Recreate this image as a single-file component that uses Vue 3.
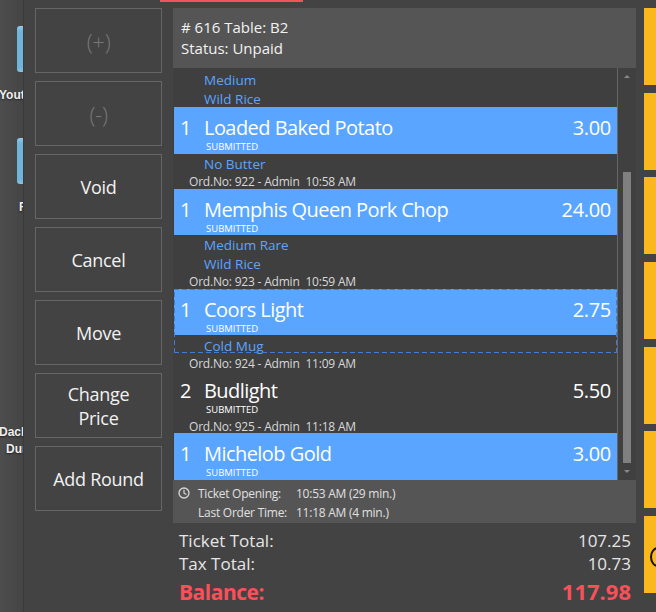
<template>
  <div class="screen">
    <aside class="strip">
      <div v-for="tile in stripTiles" :key="tile.label" class="strip-tile" :style="{ height: tile.height + 'px' }">
        <div v-if="tile.icon" class="strip-icon"></div>
        <div class="strip-label" :style="{ marginLeft: tile.indent + 'px' }">{{ tile.label }}</div>
        <div v-if="tile.label2" class="strip-label" :style="{ marginLeft: tile.indent2 + 'px' }">{{ tile.label2 }}</div>
      </div>
    </aside>

    <div class="main">
      <div class="top-line"></div>
      <div class="columns">
        <div class="actions">
          <button v-for="a in actions" :key="a.label" class="action" :class="{ disabled: a.disabled }">
            <span v-html="a.label"></span>
          </button>
        </div>

        <section class="ticket">
          <header class="ticket-head">
            <div># 616 Table: B2</div>
            <div>Status: Unpaid</div>
          </header>

          <div class="ticket-body">
            <div class="orders">
              <div class="mod first">Medium</div>
              <div class="mod">Wild Rice</div>
              <template v-for="o in orders" :key="o.name">
                <div :class="{ focused: o.focused }">
                  <div class="item" :class="{ selected: o.selected }">
                    <div class="item-line">
                      <span class="qty">{{ o.qty }}</span>
                      <span class="name">{{ o.name }}</span>
                      <span class="price">{{ o.price }}</span>
                    </div>
                    <div class="state">SUBMITTED</div>
                  </div>
                  <div v-for="m in o.mods" :key="m" class="mod">{{ m }}</div>
                </div>
                <div v-if="o.meta" class="meta">{{ o.meta }}</div>
              </template>
            </div>
            <div class="scrollbar">
              <div class="arrow up"></div>
              <div class="track"><div class="thumb"></div></div>
              <div class="arrow down"></div>
            </div>
          </div>

          <footer class="ticket-foot">
            <svg class="clock" width="12" height="12" viewBox="0 0 12 12">
              <circle cx="6" cy="6" r="5" fill="none" stroke="#d8d8d8" stroke-width="1.3" />
              <path d="M6 2.8V6.2L8.4 7.6" fill="none" stroke="#d8d8d8" stroke-width="1.2" />
            </svg>
            <div class="times">
              <span>Ticket Opening:</span><span>10:53 AM (29 min.)</span>
              <span>Last Order Time:</span><span>11:18 AM (4 min.)</span>
            </div>
          </footer>

          <div class="totals">
            <div class="total"><span>Ticket Total:</span><span>107.25</span></div>
            <div class="total"><span>Tax Total:</span><span>10.73</span></div>
            <div class="total balance"><span>Balance:</span><span class="balance-value">117.98</span></div>
          </div>
        </section>

        <div class="tiles">
          <div v-for="n in 7" :key="n" class="tile">
            <span v-if="n === 7" class="tile-glyph"></span>
          </div>
        </div>
      </div>
    </div>
  </div>
</template>

<script setup>
const stripTiles = [
  { label: 'Youtube', icon: true, indent: -1, height: 112 },
  { label: 'Fish', icon: true, indent: 19, height: 286 },
  { label: 'Dachshund', label2: 'Durham', indent: -1, indent2: 6, height: 100 }
]

const actions = [
  { label: '(+)', disabled: true },
  { label: '(-)', disabled: true },
  { label: 'Void' },
  { label: 'Cancel' },
  { label: 'Move' },
  { label: 'Change<br>Price' },
  { label: 'Add Round' }
]

const orders = [
  { qty: 1, name: 'Loaded Baked Potato', price: '3.00', selected: true, mods: ['No Butter'], meta: 'Ord.No: 922 - Admin  10:58 AM' },
  { qty: 1, name: 'Memphis Queen Pork Chop', price: '24.00', selected: true, mods: ['Medium Rare', 'Wild Rice'], meta: 'Ord.No: 923 - Admin  10:59 AM' },
  { qty: 1, name: 'Coors Light', price: '2.75', selected: true, focused: true, mods: ['Cold Mug'], meta: 'Ord.No: 924 - Admin  11:09 AM' },
  { qty: 2, name: 'Budlight', price: '5.50', mods: [], meta: 'Ord.No: 925 - Admin  11:18 AM' },
  { qty: 1, name: 'Michelob Gold', price: '3.00', selected: true, mods: [] }
]
</script>

<style>
html, body { margin: 0; background: #434343; }
</style>

<style scoped>
.screen {
  width: 656px;
  height: 612px;
  display: flex;
  overflow: hidden;
  background: #434343;
  color: #f2f2f2;
  font-family: "Open Sans", "Noto Sans", sans-serif;
}

.strip {
  width: 23px;
  flex: none;
  padding-top: 26px;
  overflow: hidden;
  background: linear-gradient(90deg, #4d4d4d, #454545);
  border-right: 1px solid #3a3a3a;
}
.strip-tile { width: 23px; }
.strip-icon {
  width: 20px;
  height: 46px;
  margin-left: 17px;
  margin-bottom: 15px;
  border-radius: 3px 0 0 3px;
  background: linear-gradient(180deg, #93cbe6 0, #6fb5da 12%, #6fb5da 90%, #8cc2dd 100%);
}
.strip-label {
  white-space: nowrap;
  font: bold 12px/17px "Liberation Sans", sans-serif;
  color: #eee;
  text-shadow: 0 1px 2px #222;
}

.main { flex: 1; min-width: 0; }
.top-line {
  width: 143px;
  height: 2px;
  margin-left: 136px;
  background: #f2545b;
}
.columns {
  display: flex;
  padding: 6px 0 0 11px;
}

.actions {
  width: 127px;
  flex: none;
  display: flex;
  flex-direction: column;
  gap: 8px;
}
.action {
  height: 65px;
  padding: 0;
  border: 1px solid #666;
  background: transparent;
  color: #f2f2f2;
  font: 18px/24px "Open Sans", "Noto Sans", sans-serif;
  letter-spacing: -0.3px;
}
.action.disabled {
  font-size: 22px;
  font-weight: 300;
  color: #777;
}

.ticket {
  width: 463px;
  flex: none;
  margin-left: 11px;
}
.ticket-head {
  height: 60px;
  box-sizing: border-box;
  padding: 9px 0 0 8px;
  background: #555;
  font-size: 15px;
  line-height: 21px;
}
.ticket-body {
  height: 412px;
  display: flex;
  background: #3f3f3f;
  overflow: hidden;
}
.orders {
  flex: 1;
  min-width: 0;
  padding-left: 1px;
}
.item {
  height: 46.5px;
  box-sizing: border-box;
  padding: 7px 6px 0 6px;
}
.item.selected { background: #5aa5ff; }
.item-line {
  display: flex;
  align-items: baseline;
  font-size: 20px;
  line-height: 27px;
  color: #fff;
}
.qty { width: 24px; }
.name { flex: 1; letter-spacing: -0.55px; }
.price { letter-spacing: -0.3px; }
.state {
  margin: 1px 0 0 26px;
  font-size: 9.5px;
  line-height: 10px;
  color: #fff;
}
.mod {
  height: 18.5px;
  padding-left: 30px;
  font-size: 13.5px;
  line-height: 21px;
  color: #5aa5ff;
}
.mod.first { padding-top: 2px; }
.meta {
  height: 16.5px;
  padding-left: 15px;
  font-size: 12px;
  line-height: 20px;
  letter-spacing: -0.2px;
  color: #d8d8d8;
  white-space: pre;
}
.focused { position: relative; }
.focused .mod { line-height: 23px; }
/* dashed focus rectangle, longer dashes than outline:dashed gives */
.focused::after {
  content: "";
  position: absolute;
  inset: 0 0 1px 0;
  pointer-events: none;
  background:
    repeating-linear-gradient(90deg, #3d7fd6 0 5px, transparent 5px 8px) top / 100% 1px no-repeat,
    repeating-linear-gradient(90deg, #3d7fd6 0 5px, transparent 5px 8px) bottom / 100% 1px no-repeat,
    repeating-linear-gradient(0deg, #3d7fd6 0 5px, transparent 5px 8px) left / 1px 100% no-repeat,
    repeating-linear-gradient(0deg, #3d7fd6 0 5px, transparent 5px 8px) right / 1px 100% no-repeat;
}

.scrollbar {
  width: 17px;
  flex: none;
  margin-right: 1px;
  display: flex;
  flex-direction: column;
  align-items: center;
  border-left: 1px solid #666;
  background: #404040;
}
.arrow {
  width: 0;
  height: 0;
  border-left: 3px solid transparent;
  border-right: 3px solid transparent;
}
.arrow.up { margin-top: 7px; border-bottom: 3px solid #888; }
.arrow.down { margin-bottom: 7px; border-top: 3px solid #888; }
.track { flex: 1; width: 8px; padding-top: 94px; box-sizing: border-box; }
.thumb { height: 291px; background: #808080; }

.ticket-foot {
  height: 43px;
  box-sizing: border-box;
  display: flex;
  padding: 5px 0 0 5px;
  background: #555;
}
.clock { flex: none; margin-top: 2px; }
.times {
  display: grid;
  grid-template-columns: 98px auto;
  justify-content: start;
  margin-left: 8px;
  font-size: 12px;
  line-height: 18px;
  letter-spacing: -0.25px;
  color: #e0e0e0;
}

.totals { padding: 6px 5px 0 6px; }
.total {
  display: flex;
  justify-content: space-between;
  font-size: 17px;
  line-height: 23px;
  color: #e6e6e6;
}
.balance {
  margin-top: 2px;
  align-items: baseline;
  font-size: 21px;
  line-height: 28px;
  font-weight: 700;
  letter-spacing: -0.5px;
  color: #f9505a;
}
.balance-value { font-size: 22px; letter-spacing: 0; }

.tiles {
  margin-left: 8px;
  flex: 1;
  display: flex;
  flex-direction: column;
  gap: 7.7px;
}
.tile {
  width: 12px;
  height: 77px;
  position: relative;
  overflow: hidden;
  background: #fbb81c;
}
.tile-glyph {
  position: absolute;
  left: 6px;
  top: 31px;
  width: 12px;
  height: 16px;
  border: 2px solid #111;
  border-radius: 50%;
}
</style>
